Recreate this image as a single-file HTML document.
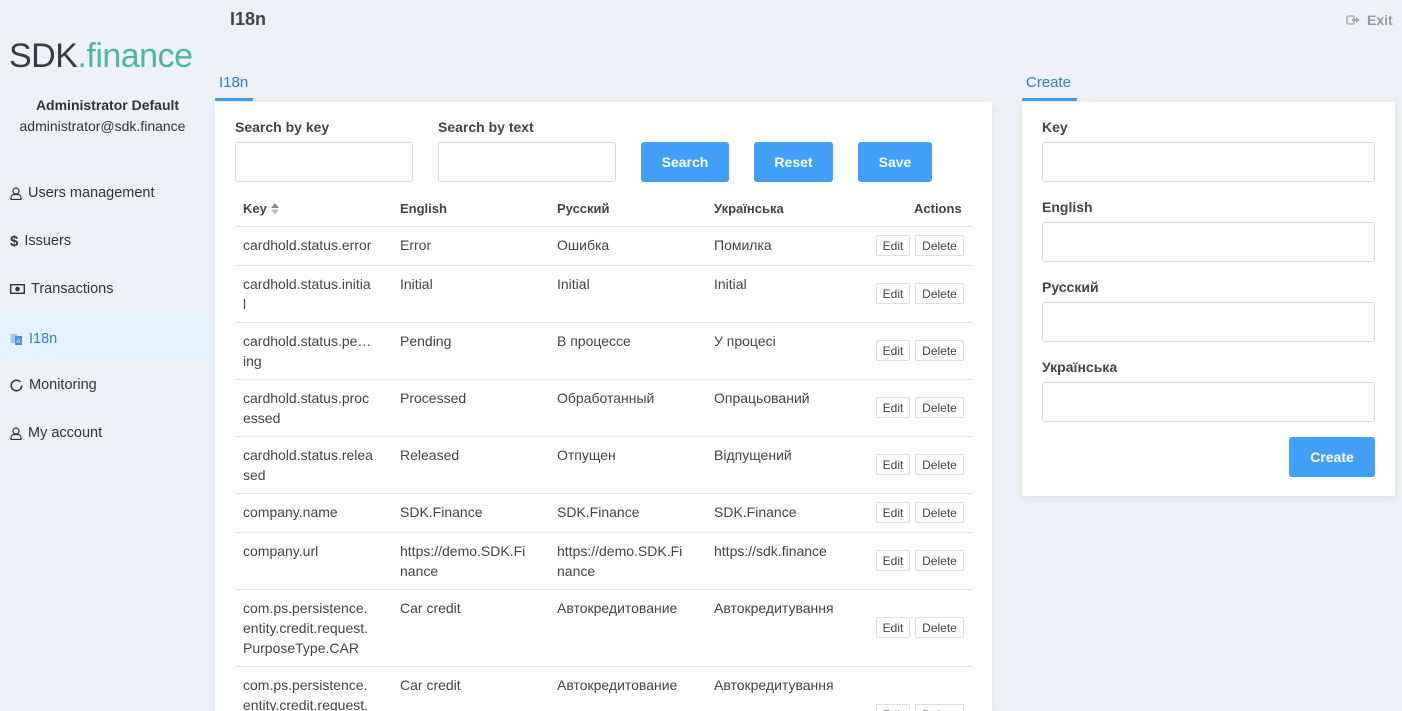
<!DOCTYPE html>
<html style="overflow:hidden;height:711px"><head><meta charset="utf-8"><style>
*{box-sizing:border-box;margin:0;padding:0}
body{width:1402px;height:711px;overflow:hidden;background:#eef1f6;font-family:"Liberation Sans","DejaVu Sans",sans-serif;color:#333;position:relative;font-size:14px}
.a{position:absolute}
.nav{position:absolute;left:0;width:215px;height:48px;display:flex;align-items:center;padding-left:10px;font-size:14.5px;color:#333}
.nav svg{margin-right:6px}
.card{position:absolute;background:#fff;box-shadow:0 2px 8px rgba(0,0,0,.08)}
.lbl{position:absolute;font-weight:bold;font-size:14px;color:#444}
.inp{position:absolute;border:1px solid #d8dbe2;border-radius:3px;background:#fff}
.btn{position:absolute;background:#42a0fb;color:#fff;border-radius:3px;display:flex;align-items:center;justify-content:center;font-weight:bold;font-size:14px}
.th{position:absolute;top:201px;font-weight:bold;font-size:13px;color:#444}
.line{position:absolute;left:235px;width:738px;height:1px;background:#e3e5e9}
.c{position:absolute;font-size:14px;line-height:20px;color:#444}
.sb{position:absolute;height:21px;border:1px solid #dcdfe4;border-radius:2px;font-size:12px;color:#444;display:flex;align-items:center;justify-content:center;background:#fff}
</style></head><body>
<div class="a" style="left:230px;top:9px;font-size:18px;font-weight:bold;color:#444">I18n</div>
<div class="a" style="left:1346px;top:12px;font-size:14px;font-weight:bold;color:#999">
<svg width="14" height="12" viewBox="0 0 14 12" style="vertical-align:-1px;margin-right:7px"><rect x="1" y="2" width="7" height="8" rx="1.5" fill="none" stroke="#aaa" stroke-width="1.5"/><path d="M6 5h4V2.5L13.5 6 10 9.5V7H6z" fill="#aaa"/></svg>Exit</div>

<div class="a" style="left:9px;top:37px;font-size:34px;letter-spacing:-0.5px;color:#34403f"><span>SDK</span><span style="color:#4cb6a6">.finance</span></div>
<div class="a" style="left:0;width:215px;top:97px;text-align:center;font-weight:bold;font-size:14px;color:#333">Administrator Default</div>
<div class="a" style="left:0;width:205px;top:118px;text-align:center;font-size:14px;color:#333">administrator@sdk.finance</div>

<div class="nav" style="top:169px"><svg width="12" height="13" viewBox="0 0 12 13"><circle cx="6" cy="4" r="3" fill="none" stroke="#333" stroke-width="1.2"/><path d="M1 12.5v-2a3 3 0 0 1 3-3h4a3 3 0 0 1 3 3v2z" fill="none" stroke="#333" stroke-width="1.2"/></svg>Users management</div>
<div class="nav" style="top:217px"><b style="margin-right:6px;font-size:15px">$</b>Issuers</div>
<div class="nav" style="top:265px"><svg width="15" height="10" viewBox="0 0 15 10"><rect x="0.7" y="0.7" width="13.6" height="8.6" fill="none" stroke="#333" stroke-width="1.4"/><circle cx="7.5" cy="5" r="2.3" fill="#333"/></svg>Transactions</div>
<div class="nav" style="top:315px;background:#e6f3fd;color:#2a7ed8"><svg width="13" height="13" viewBox="0 0 13 13"><rect x="0.5" y="1" width="7" height="9" fill="#9cc9ef"/><rect x="5" y="3" width="7" height="9" fill="#4a90d9"/><text x="6.5" y="10" font-size="6" fill="#fff" font-family="Liberation Sans">A</text></svg>I18n</div>
<div class="nav" style="top:361px"><svg width="13" height="13" viewBox="0 0 13 13"><circle cx="6.5" cy="6.5" r="5.3" fill="none" stroke="#333" stroke-width="1.5" stroke-dasharray="29 4"/></svg>Monitoring</div>
<div class="nav" style="top:409px"><svg width="12" height="13" viewBox="0 0 12 13"><circle cx="6" cy="4" r="3" fill="none" stroke="#333" stroke-width="1.2"/><path d="M1 12.5v-2a3 3 0 0 1 3-3h4a3 3 0 0 1 3 3v2z" fill="none" stroke="#333" stroke-width="1.2"/></svg>My account</div>

<div class="a" style="left:219px;top:74px;font-size:15px;color:#2a7ed8">I18n</div>
<div class="a" style="left:215px;top:98px;width:38px;height:3px;background:#42a0fb"></div>
<div class="a" style="left:1026px;top:74px;font-size:15px;color:#2a7ed8">Create</div>
<div class="a" style="left:1022px;top:98px;width:55px;height:3px;background:#42a0fb"></div>

<div class="card" style="left:215px;top:102px;width:777px;height:609px"></div>
<div class="lbl" style="left:235px;top:119px">Search by key</div>
<div class="lbl" style="left:438px;top:119px">Search by text</div>
<div class="inp" style="left:235px;top:142px;width:178px;height:40px"></div>
<div class="inp" style="left:438px;top:142px;width:178px;height:40px"></div>
<div class="btn" style="left:641px;top:142px;width:88px;height:40px">Search</div>
<div class="btn" style="left:754px;top:142px;width:79px;height:40px">Reset</div>
<div class="btn" style="left:858px;top:142px;width:74px;height:40px">Save</div>

<div class="th" style="left:243px">Key <svg width="10" height="13" viewBox="0 0 10 13" style="vertical-align:-2px"><path d="M1 6L5 1l4 5z" fill="#888"/><path d="M1 7.5l4 5 4-5z" fill="#bbb"/></svg></div>
<div class="th" style="left:400px">English</div>
<div class="th" style="left:557px">Русский</div>
<div class="th" style="left:714px">Українська</div>
<div class="th" style="left:914px">Actions</div>

<div class="line" style="top:226px"></div>
<div class="c" style="left:243px;top:235px">cardhold.status.error</div><div class="c" style="left:400px;top:235px">Error</div><div class="c" style="left:557px;top:235px">Ошибка</div><div class="c" style="left:714px;top:235px">Помилка</div>
<div class="sb" style="left:876px;top:235px;width:34px">Edit</div><div class="sb" style="left:915px;top:235px;width:49px">Delete</div>

<div class="line" style="top:265px"></div>
<div class="c" style="left:243px;top:274px">cardhold.status.initia<br>l</div><div class="c" style="left:400px;top:274px">Initial</div><div class="c" style="left:557px;top:274px">Initial</div><div class="c" style="left:714px;top:274px">Initial</div>
<div class="sb" style="left:876px;top:283px;width:34px">Edit</div><div class="sb" style="left:915px;top:283px;width:49px">Delete</div>

<div class="line" style="top:322px"></div>
<div class="c" style="left:243px;top:331px">cardhold.status.pe…<br>ing</div><div class="c" style="left:400px;top:331px">Pending</div><div class="c" style="left:557px;top:331px">В процессе</div><div class="c" style="left:714px;top:331px">У процесі</div>
<div class="sb" style="left:876px;top:340px;width:34px">Edit</div><div class="sb" style="left:915px;top:340px;width:49px">Delete</div>

<div class="line" style="top:379px"></div>
<div class="c" style="left:243px;top:388px">cardhold.status.proc<br>essed</div><div class="c" style="left:400px;top:388px">Processed</div><div class="c" style="left:557px;top:388px">Обработанный</div><div class="c" style="left:714px;top:388px">Опрацьований</div>
<div class="sb" style="left:876px;top:397px;width:34px">Edit</div><div class="sb" style="left:915px;top:397px;width:49px">Delete</div>

<div class="line" style="top:436px"></div>
<div class="c" style="left:243px;top:445px">cardhold.status.relea<br>sed</div><div class="c" style="left:400px;top:445px">Released</div><div class="c" style="left:557px;top:445px">Отпущен</div><div class="c" style="left:714px;top:445px">Відпущений</div>
<div class="sb" style="left:876px;top:454px;width:34px">Edit</div><div class="sb" style="left:915px;top:454px;width:49px">Delete</div>

<div class="line" style="top:493px"></div>
<div class="c" style="left:243px;top:502px">company.name</div><div class="c" style="left:400px;top:502px">SDK.Finance</div><div class="c" style="left:557px;top:502px">SDK.Finance</div><div class="c" style="left:714px;top:502px">SDK.Finance</div>
<div class="sb" style="left:876px;top:502px;width:34px">Edit</div><div class="sb" style="left:915px;top:502px;width:49px">Delete</div>

<div class="line" style="top:532px"></div>
<div class="c" style="left:243px;top:541px">company.url</div><div class="c" style="left:400px;top:541px">https://demo.SDK.Fi<br>nance</div><div class="c" style="left:557px;top:541px">https://demo.SDK.Fi<br>nance</div><div class="c" style="left:714px;top:541px">https://sdk.finance</div>
<div class="sb" style="left:876px;top:550px;width:34px">Edit</div><div class="sb" style="left:915px;top:550px;width:49px">Delete</div>

<div class="line" style="top:589px"></div>
<div class="c" style="left:243px;top:598px">com.ps.persistence.<br>entity.credit.request.<br>PurposeType.CAR</div><div class="c" style="left:400px;top:598px">Car credit</div><div class="c" style="left:557px;top:598px">Автокредитование</div><div class="c" style="left:714px;top:598px">Автокредитування</div>
<div class="sb" style="left:876px;top:617px;width:34px">Edit</div><div class="sb" style="left:915px;top:617px;width:49px">Delete</div>

<div class="line" style="top:666px"></div>
<div class="c" style="left:243px;top:675px">com.ps.persistence.<br>entity.credit.request.</div><div class="c" style="left:400px;top:675px">Car credit</div><div class="c" style="left:557px;top:675px">Автокредитование</div><div class="c" style="left:714px;top:675px">Автокредитування</div>
<div class="sb" style="left:876px;top:704px;width:34px">Edit</div><div class="sb" style="left:915px;top:704px;width:49px">Delete</div>

<div class="card" style="left:1022px;top:102px;width:373px;height:394px"></div>
<div class="lbl" style="left:1042px;top:119px">Key</div>
<div class="inp" style="left:1042px;top:142px;width:333px;height:40px"></div>
<div class="lbl" style="left:1042px;top:199px">English</div>
<div class="inp" style="left:1042px;top:222px;width:333px;height:40px"></div>
<div class="lbl" style="left:1042px;top:279px">Русский</div>
<div class="inp" style="left:1042px;top:302px;width:333px;height:40px"></div>
<div class="lbl" style="left:1042px;top:359px">Українська</div>
<div class="inp" style="left:1042px;top:382px;width:333px;height:40px"></div>
<div class="btn" style="left:1289px;top:437px;width:86px;height:40px">Create</div>
</body></html>
